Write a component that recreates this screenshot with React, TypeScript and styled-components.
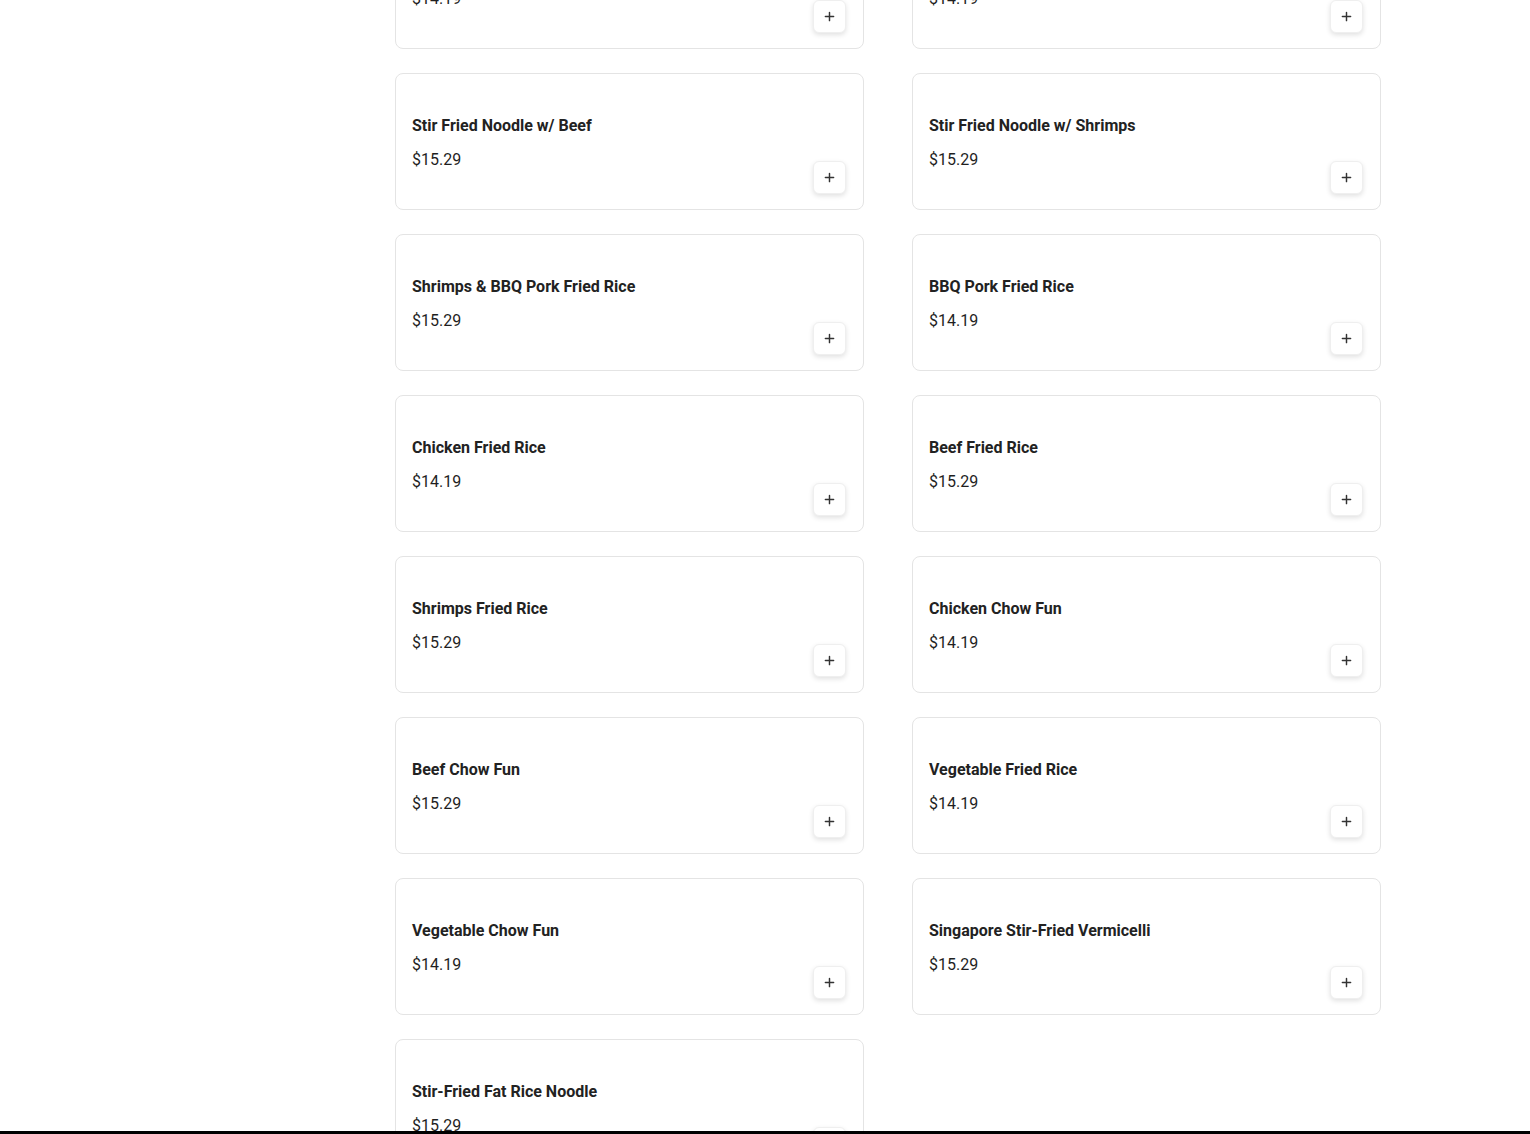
import * as React from "react";
import styled, { createGlobalStyle } from "styled-components";

const GlobalStyle = createGlobalStyle`
  *, *::before, *::after {
    box-sizing: border-box;
  }
  html, body {
    margin: 0;
    padding: 0;
    background: #ffffff;
    font-family: Roboto, "Liberation Sans", Arial, sans-serif;
    color: #1f1f1f;
  }
  body {
    overflow: hidden;
  }
`;

const Page = styled.div`
  display: flex;
  height: 1134px;
  overflow: hidden;
`;

const Sidebar = styled.aside`
  width: 395px;
  flex-shrink: 0;
`;

const Menu = styled.div`
  display: grid;
  grid-template-columns: 469px 469px;
  grid-auto-rows: 137px;
  column-gap: 48px;
  row-gap: 24px;
  align-content: start;
  margin-top: -88px;
`;

const Card = styled.div`
  display: flex;
  flex-direction: column;
  border: 1px solid #e4e4e4;
  border-radius: 8px;
  padding: 40px 16px 15px;
  background: #fff;
  height: 137px;
`;

const Body = styled.div`
  display: flex;
  justify-content: space-between;
  align-items: flex-end;
`;

const Info = styled.div`
  display: flex;
  flex-direction: column;
  gap: 10px;
  padding-bottom: 22px;
`;

const Title = styled.div`
  font-size: 16px;
  font-weight: 700;
  line-height: 24px;
  color: #222;
`;

const Price = styled.div`
  font-size: 16px;
  font-weight: 400;
  line-height: 24px;
  color: #1f1f1f;
`;

const AddButton = styled.button`
  display: flex;
  align-items: center;
  justify-content: center;
  width: 33px;
  height: 33px;
  padding: 0;
  margin: 0 1px 0 0;
  border: 1px solid #efefef;
  border-radius: 6px;
  background: #fff;
  box-shadow: 0 2px 5px rgba(0, 0, 0, 0.12);
  color: #333;
  cursor: pointer;
`;

const BottomBar = styled.div`
  position: fixed;
  left: 0;
  right: 0;
  bottom: 0;
  height: 3px;
  background: #000;
`;

const PlusIcon = () => (
  <svg width="11" height="11" viewBox="0 0 12 12" fill="none">
    <path d="M6 1.5v9M1.5 6h9" stroke="#333" strokeWidth="1.6" strokeLinecap="round" />
  </svg>
);

const items = [
  { name: "Stir Fried Noodle w/ Chicken", price: "$14.19" },
  { name: "Stir Fried Noodle w/ Vegetable", price: "$14.19" },
  { name: "Stir Fried Noodle w/ Beef", price: "$15.29" },
  { name: "Stir Fried Noodle w/ Shrimps", price: "$15.29" },
  { name: "Shrimps & BBQ Pork Fried Rice", price: "$15.29" },
  { name: "BBQ Pork Fried Rice", price: "$14.19" },
  { name: "Chicken Fried Rice", price: "$14.19" },
  { name: "Beef Fried Rice", price: "$15.29" },
  { name: "Shrimps Fried Rice", price: "$15.29" },
  { name: "Chicken Chow Fun", price: "$14.19" },
  { name: "Beef Chow Fun", price: "$15.29" },
  { name: "Vegetable Fried Rice", price: "$14.19" },
  { name: "Vegetable Chow Fun", price: "$14.19" },
  { name: "Singapore Stir-Fried Vermicelli", price: "$15.29" },
  { name: "Stir-Fried Fat Rice Noodle", price: "$15.29" },
];

export default function App() {
  return (
    <>
      <GlobalStyle />
      <Page>
        <Sidebar />
        <Menu>
          {items.map((item) => (
            <Card key={item.name}>
              <Body>
                <Info>
                  <Title>{item.name}</Title>
                  <Price>{item.price}</Price>
                </Info>
                <AddButton aria-label={`Add ${item.name}`}>
                  <PlusIcon />
                </AddButton>
              </Body>
            </Card>
          ))}
        </Menu>
      </Page>
      <BottomBar />
    </>
  );
}
